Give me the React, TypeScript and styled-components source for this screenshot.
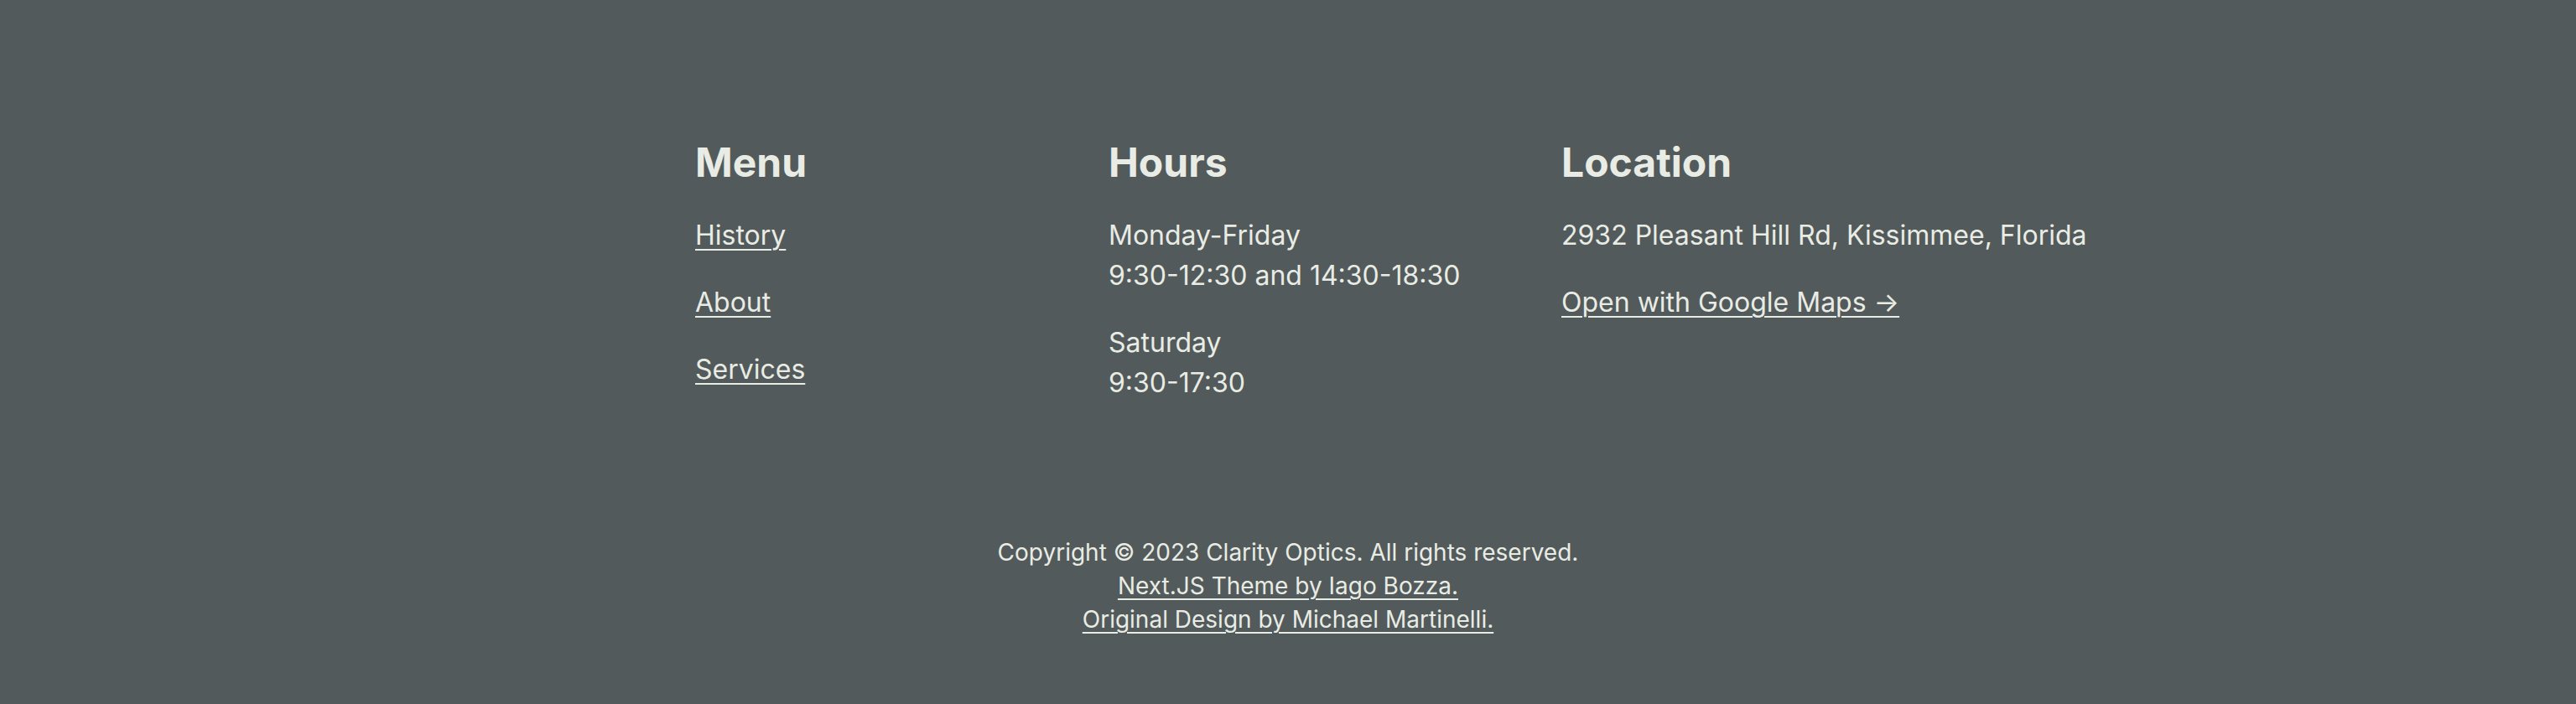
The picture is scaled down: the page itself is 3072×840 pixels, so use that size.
import React from "react";
import styled, { createGlobalStyle } from "styled-components";

const GlobalStyle = createGlobalStyle`
  html, body {
    margin: 0;
    padding: 0;
    background: #525a5b;
  }
  body {
    font-family: Inter, "Noto Sans", sans-serif;
    color: #e9ece4;
    font-size: 32px;
    line-height: 48px;
  }
  * { box-sizing: border-box; }
`;

const Footer = styled.footer`
  min-height: 840px;
  padding: 164px 0 80px;
  display: flex;
  flex-direction: column;
  align-items: center;
`;

const Columns = styled.div`
  width: 1414px;
  display: grid;
  grid-template-columns: 453px 500px max-content;
  column-gap: 40px;
`;

const Column = styled.section`
  display: flex;
  flex-direction: column;
`;

const Heading = styled.h2`
  margin: 0 0 33px;
  font-size: 48px;
  line-height: 60px;
  font-weight: 700;
`;

const LinkList = styled.ul`
  list-style: none;
  margin: 0;
  padding: 0;
  display: flex;
  flex-direction: column;
  gap: 32px;
`;

const Link = styled.a`
  color: inherit;
  text-decoration: underline;
  text-decoration-thickness: 2px;
  text-underline-offset: 5px;
`;

const Para = styled.p`
  margin: 0 0 32px;
  white-space: nowrap;

  &:last-child {
    margin-bottom: 0;
  }
`;

const Copyright = styled.div`
  margin-top: 158px;
  text-align: center;
  font-size: 28px;
  line-height: 40px;
`;

const CopyLine = styled.div`
  display: block;
`;

export default function App() {
  return (
    <>
      <GlobalStyle />
      <Footer>
        <Columns>
          <Column>
            <Heading>Menu</Heading>
            <LinkList>
              <li><Link href="#">History</Link></li>
              <li><Link href="#">About</Link></li>
              <li><Link href="#">Services</Link></li>
            </LinkList>
          </Column>
          <Column>
            <Heading>Hours</Heading>
            <Para>
              Monday-Friday
              <br />
              9:30-12:30 and 14:30-18:30
            </Para>
            <Para>
              Saturday
              <br />
              9:30-17:30
            </Para>
          </Column>
          <Column>
            <Heading>Location</Heading>
            <Para>2932 Pleasant Hill Rd, Kissimmee, Florida</Para>
            <div>
              <Link href="#">Open with Google Maps →</Link>
            </div>
          </Column>
        </Columns>
        <Copyright>
          <CopyLine>Copyright © 2023 Clarity Optics. All rights reserved.</CopyLine>
          <CopyLine>
            <Link href="#">Next.JS Theme by Iago Bozza.</Link>
          </CopyLine>
          <CopyLine>
            <Link href="#">Original Design by Michael Martinelli.</Link>
          </CopyLine>
        </Copyright>
      </Footer>
    </>
  );
}
